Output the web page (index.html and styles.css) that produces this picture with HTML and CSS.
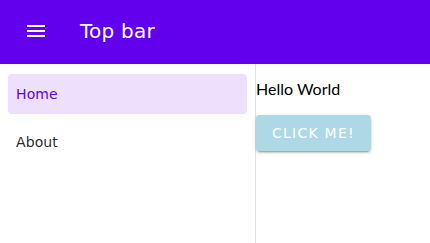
FILE: index.html
```html
<!DOCTYPE html>
<html lang="en">
  <head>
    <meta charset="UTF-8" />
    <meta name="viewport" content="width=device-width, initial-scale=1.0" />
    <title>Top bar</title>
    <link rel="stylesheet" href="styles.css">
  </head>
  <body>
    <header class="top-bar">
      <button class="menu-btn" aria-label="Menu">
        <svg width="24" height="24" viewBox="0 0 24 24">
          <path fill="#fff" d="M3 18h18v-2H3v2zm0-5h18v-2H3v2zm0-7v2h18V6H3z" />
        </svg>
      </button>
      <span class="title">Top bar</span>
    </header>

    <div class="layout">
      <aside class="drawer">
        <ul class="nav-list">
          <li class="nav-item active">Home</li>
          <li class="nav-item">About</li>
        </ul>
      </aside>

      <main class="content">
        <div class="greeting">Hello World</div>
        <button class="btn">Click me!</button>
      </main>
    </div>
  </body>
</html>
```

FILE: styles.css
```css
:root {
  --primary-color: #6200ee;
  --active-bg: #ece0fd;
  --text-color: rgba(0, 0, 0, 0.87);
  --divider: #e0e0e0;
  --header-height: 64px;
}

* {
  margin: 0;
  padding: 0;
  box-sizing: border-box;
}

html,
body {
  height: 100%;
}

body {
  font-family: "DejaVu Sans", sans-serif;
  background: #fff;
  color: var(--text-color);
  display: flex;
  flex-direction: column;
}

.top-bar {
  height: var(--header-height);
  background-color: var(--primary-color);
  color: #fff;
  display: flex;
  align-items: center;
  padding: 0 24px;
  flex-shrink: 0;
}

.menu-btn {
  width: 24px;
  height: 24px;
  border: none;
  background: none;
  display: flex;
  margin-top: -2px;
}

.title {
  margin-left: 32px;
  font-size: 20px;
  letter-spacing: 0.25px;
  margin-top: -2px;
}

.layout {
  flex: 1;
  display: flex;
}

.drawer {
  width: 256px;
  border-right: 1px solid var(--divider);
  flex-shrink: 0;
}

.nav-list {
  list-style: none;
  padding: 10px 8px 10px 8px;
  display: flex;
  flex-direction: column;
  gap: 8px;
}

.nav-item {
  height: 40px;
  padding: 0 8px;
  display: flex;
  align-items: center;
  font-size: 14px;
  letter-spacing: 0.1px;
  border-radius: 4px;
}

.nav-item.active {
  background-color: var(--active-bg);
  color: var(--primary-color);
}

.content {
  flex: 1;
  padding-top: 15px;
}

.greeting {
  font-family: "Lato", sans-serif;
  font-size: 16px;
  line-height: 20px;
  color: #000;
}

.btn {
  margin-top: 16px;
  height: 36px;
  padding: 0 16px;
  border: none;
  border-radius: 4px;
  background-color: #add8e6;
  color: #fff;
  font-family: "DejaVu Sans", sans-serif;
  font-size: 14px;
  letter-spacing: 1.25px;
  text-transform: uppercase;
  box-shadow: 0 3px 1px -2px rgba(0, 0, 0, 0.2), 0 2px 2px 0 rgba(0, 0, 0, 0.14),
    0 1px 5px 0 rgba(0, 0, 0, 0.12);
}
```
